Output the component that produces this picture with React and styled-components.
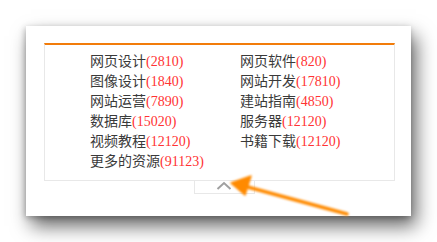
import React from "react";
import styled, { createGlobalStyle } from "styled-components";

const GlobalStyle = createGlobalStyle`
  html, body {
    margin: 0;
    padding: 0;
    background: #fff;
  }
  body {
    font-family: "Noto Sans CJK SC", "Liberation Sans", sans-serif;
  }
`;

const Page = styled.div`
  position: relative;
  width: 437px;
  height: 242px;
  padding: 26px 0 0 26px;
  box-sizing: border-box;
  overflow: hidden;
`;

const Card = styled.div`
  width: 385px;
  height: 190px;
  background: #fff;
  box-shadow: 5px 10px 18px rgba(0, 0, 0, 0.6), -1px 2px 6px rgba(0, 0, 0, 0.25);
  padding: 17px 0 0 18px;
  box-sizing: border-box;
`;

const Panel = styled.div`
  width: 351px;
  border: 1px solid #e8e8e8;
  border-top: 2px solid #f27c0a;
  box-sizing: border-box;
  padding: 5px 0 10px 45px;
`;

const List = styled.ul`
  list-style: none;
  margin: 0;
  padding: 0;
  display: grid;
  grid-template-columns: 150px 150px;
`;

const Item = styled.li`
  font-size: 14px;
  line-height: 20px;
  height: 20px;
  color: #3a3a3a;
  white-space: nowrap;
`;

const Count = styled.span`
  font-family: "Liberation Serif", serif;
  color: #ff3333;
`;

const Tab = styled.div`
  width: 61px;
  height: 13px;
  margin-left: 150px;
  border: 1px solid #e8e8e8;
  border-top: none;
  box-sizing: border-box;
  display: flex;
  justify-content: center;
  padding-right: 2px;
`;

const Arrow = styled.svg`
  position: absolute;
  left: 0;
  top: 0;
  pointer-events: none;
`;

const items = [
  ["网页设计", 2810],
  ["网页软件", 820],
  ["图像设计", 1840],
  ["网站开发", 17810],
  ["网站运营", 7890],
  ["建站指南", 4850],
  ["数据库", 15020],
  ["服务器", 12120],
  ["视频教程", 12120],
  ["书籍下载", 12120],
  ["更多的资源", 91123],
];

export default function App() {
  return (
    <>
      <GlobalStyle />
      <Page>
        <Card>
          <Panel>
            <List>
              {items.map(([name, n], i) => (
                <Item key={i}>
                  {name}
                  <Count>({n})</Count>
                </Item>
              ))}
            </List>
          </Panel>
          <Tab>
            <svg width="16" height="10" viewBox="0 0 16 10">
              <path d="M1.5 8 L8 2 L14.5 8" fill="none" stroke="#a0a0a0" strokeWidth="2" />
            </svg>
          </Tab>
        </Card>
        <Arrow width="437" height="242" viewBox="0 0 437 242">
          <defs>
            <filter id="soft" x="-10%" y="-10%" width="120%" height="120%">
              <feGaussianBlur stdDeviation="0.8" />
            </filter>
          </defs>
          <g filter="url(#soft)" fill="#ff8a00" stroke="#ff8a00">
            <line x1="347" y1="214" x2="244" y2="186" strokeWidth="3.5" strokeLinecap="round" />
            <polygon points="231,183 251,176 245,195" strokeWidth="1.5" strokeLinejoin="round" />
          </g>
        </Arrow>
      </Page>
    </>
  );
}
